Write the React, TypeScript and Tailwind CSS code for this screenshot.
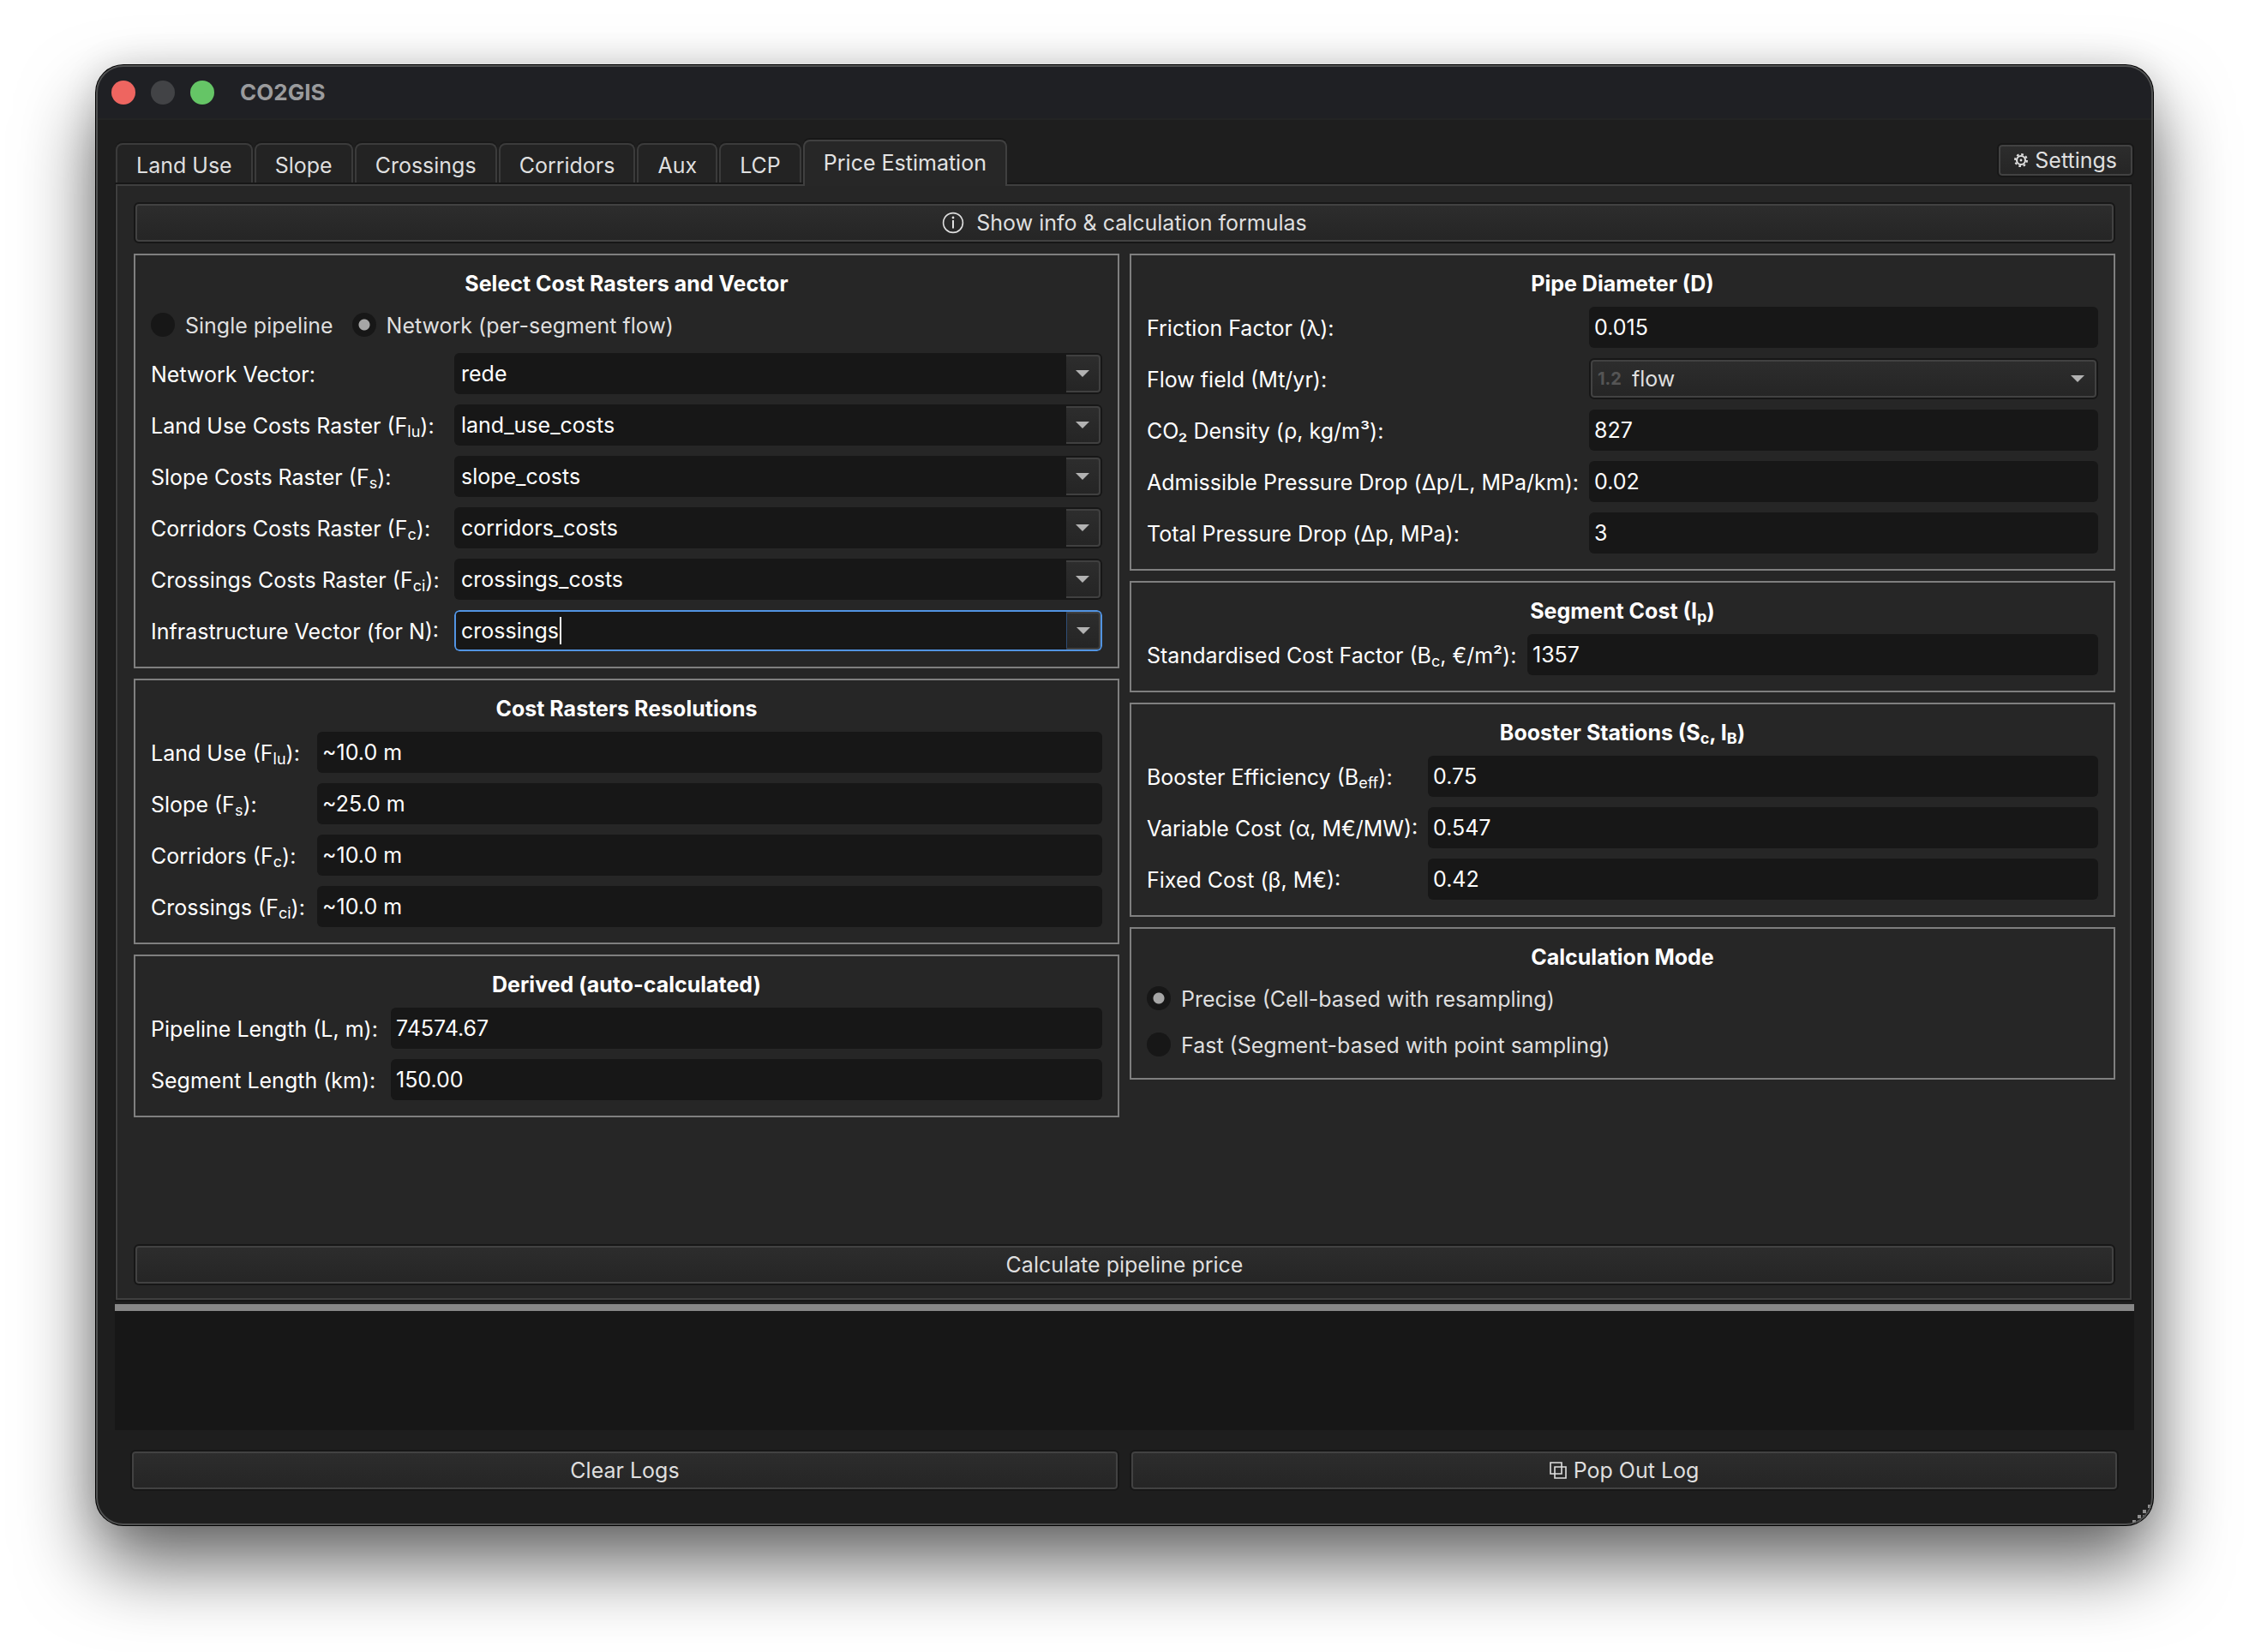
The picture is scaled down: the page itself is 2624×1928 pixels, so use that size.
import React, { useId } from "react";

const bevel =
  "rounded-md border-2 border-[#171717] bg-linear-to-b from-[#2d2d2d] to-[#252525] shadow-[inset_0_0_0_2px_#424242] text-[#dfdfdf]";

const fieldBox = "h-12 w-full min-w-0 rounded-md bg-[#171717] text-white outline-none";

function Arrow({ className = "" }: { className?: string }) {
  return (
    <svg className={className} width="16" height="8" viewBox="0 0 16 8" aria-hidden="true">
      <path d="M0 0h16L8 8z" fill="#b2b2b2" />
    </svg>
  );
}

function Sub({ children }: { children: React.ReactNode }) {
  return <span className="relative top-1 text-lg leading-none">{children}</span>;
}

function Group({ title, children }: { title: React.ReactNode; children: React.ReactNode }) {
  return (
    <section className="flex flex-col gap-3 border-2 border-[#7f7f7f] p-[18px]">
      <h2 className="h-[30px] text-center leading-[30px] font-bold text-white">{title}</h2>
      {children}
    </section>
  );
}

function Row({ label, cols, children }: { label: React.ReactNode; cols: string; children: (id: string) => React.ReactNode }) {
  const id = useId();
  return (
    <div className={`grid h-12 items-center gap-3 ${cols}`}>
      <label htmlFor={id} className="pt-0.5 whitespace-nowrap text-white">
        {label}
      </label>
      {children(id)}
    </div>
  );
}

function TextRow({ label, value, cols, readOnly }: { label: React.ReactNode; value: string; cols: string; readOnly?: boolean }) {
  return (
    <Row label={label} cols={cols}>
      {(id) => <input id={id} type="text" defaultValue={value} readOnly={readOnly} className={`${fieldBox} px-1.5`} />}
    </Row>
  );
}

function ComboRow({ label, value, active }: { label: React.ReactNode; value: string; active?: boolean }) {
  return (
    <Row label={label} cols="grid-cols-[342px_minmax(0,1fr)]">
      {(id) => (
        <div className="relative flex h-12 overflow-hidden rounded-md bg-[#171717]">
          <input id={id} type="text" defaultValue={value} className="h-12 min-w-0 flex-1 bg-transparent pl-2 text-white outline-none" />
          <button
            type="button"
            aria-label="Show options"
            className={`my-0.5 mr-0.5 flex w-10 items-center justify-center rounded-r border-y-2 border-r-2 border-[#404040] bg-linear-to-b from-[#2d2d2d] to-[#252525] ${active ? "border-l border-l-[#2f4d75]" : ""}`}
          >
            <Arrow />
          </button>
          {active && (
            <>
              <span className="pointer-events-none absolute inset-0 rounded-md border-2 border-[#5294e2]" />
              <span className="pointer-events-none absolute top-2 left-[123px] h-8 w-0.5 bg-white" />
            </>
          )}
        </div>
      )}
    </Row>
  );
}

function Radio({ label, name, checked }: { label: string; name: string; checked?: boolean }) {
  return (
    <label className="flex items-center gap-3 text-[#dfdfdf]">
      <input
        type="radio"
        name={name}
        defaultChecked={checked}
        className="size-7 shrink-0 appearance-none rounded-full bg-[#171717] checked:bg-[radial-gradient(circle,#a6a6a6_0,#a6a6a6_6px,#171717_7px)]"
      />
      <span className="pt-0.5">{label}</span>
    </label>
  );
}

const tabs = ["Land Use", "Slope", "Crossings", "Corridors", "Aux", "LCP", "Price Estimation"];

const res = "grid-cols-[182px_minmax(0,1fr)]";
const derived = "grid-cols-[268px_minmax(0,1fr)]";
const pipe = "grid-cols-[504px_minmax(0,1fr)]";
const segment = "grid-cols-[432px_minmax(0,1fr)]";
const booster = "grid-cols-[316px_minmax(0,1fr)]";

export default function App() {
  return (
    <div className="min-h-screen bg-white px-28 pt-[76px] pb-[148px] font-['Inter','Noto_Sans',sans-serif] text-[25px] leading-[30px]">
      <div className="relative flex min-h-[1704px] flex-col overflow-hidden rounded-[32px] bg-[#1e1e1e] shadow-[0_0_0_1px_#000,0_46px_88px_rgba(0,0,0,0.6),0_0_40px_rgba(0,0,0,0.12)]">
        <header className="flex h-16 items-center gap-[18px] border-b-2 border-[#232424] bg-[#1f2024] pt-0.5 pl-[18px]">
          <button type="button" aria-label="Close" className="size-7 rounded-full bg-[#ee6560]" />
          <button type="button" aria-label="Minimize" className="size-7 rounded-full bg-[#424346]" />
          <button type="button" aria-label="Zoom" className="size-7 rounded-full bg-[#65c566]" />
          <h1 className="ml-3 text-[26px] font-bold text-[#9a9b9d]">CO2GIS</h1>
        </header>

        <main className="flex flex-1 flex-col px-[22px] pt-[23px] pb-10">
          <div className="flex items-end justify-between">
            <div role="tablist" className="z-10 -mb-1 ml-px flex items-end">
              {tabs.map((t) =>
                t === "Price Estimation" ? (
                  <button
                    key={t}
                    type="button"
                    role="tab"
                    aria-selected="true"
                    className="h-[54px] rounded-t-lg border-2 border-b-0 border-[#404040] bg-[#272727] px-[22px] pb-0.5 text-[#e2e2e2] shadow-[0_-2px_0_#171717]"
                  >
                    {t}
                  </button>
                ) : (
                  <button
                    key={t}
                    type="button"
                    role="tab"
                    aria-selected="false"
                    className="mr-0.5 mb-1 h-[46px] rounded-t-lg border-2 border-b-0 border-[#3b3b3b] bg-[#232323] px-[22px] pt-1 text-[#dfdfdf] shadow-[0_-2px_0_#191919]"
                  >
                    {t}
                  </button>
                ),
              )}
            </div>
            <button type="button" className={`mb-1.5 flex h-10 items-center gap-2 px-[18px] ${bevel}`}>
              <svg width="16" height="16" viewBox="0 0 18 18" fill="none" stroke="currentColor" aria-hidden="true">
                <circle cx="9" cy="9" r="5.6" strokeWidth="2.4" />
                <circle cx="9" cy="9" r="1.6" fill="currentColor" stroke="none" />
                <circle cx="9" cy="9" r="7.8" strokeWidth="2.4" strokeDasharray="3 3.126" />
              </svg>
              Settings
            </button>
          </div>

          <div className="mr-0.5 flex flex-1 flex-col border-x border-y-2 border-[#171717]">
            <div className="flex flex-1 flex-col gap-3 border-2 border-[#3f3f3f] bg-[#262626] pt-[19px] pr-[17px] pb-[15px] pl-[19px]">
              <button type="button" className={`flex h-12 items-center justify-center gap-3.5 ${bevel}`}>
                <svg width="26" height="26" viewBox="0 0 26 26" fill="none" stroke="currentColor" aria-hidden="true">
                  <circle cx="13" cy="13" r="11.4" strokeWidth="1.6" />
                  <path d="M13 10v9.500" strokeWidth="2" />
                  <circle cx="13" cy="7" r="1.4" fill="currentColor" stroke="none" />
                </svg>
                Show info &amp; calculation formulas
              </button>

              <div className="grid flex-1 grid-cols-2 items-start gap-3">
                <div className="flex flex-col gap-3">
                  <Group title="Select Cost Rasters and Vector">
                    <div className="flex h-[42px] items-center gap-[22px]">
                      <Radio name="source" label="Single pipeline" />
                      <Radio name="source" label="Network (per-segment flow)" checked />
                    </div>
                    <ComboRow label="Network Vector:" value="rede" />
                    <ComboRow label={<>Land Use Costs Raster (F<Sub>lu</Sub>):</>} value="land_use_costs" />
                    <ComboRow label={<>Slope Costs Raster (F<Sub>s</Sub>):</>} value="slope_costs" />
                    <ComboRow label={<>Corridors Costs Raster (F<Sub>c</Sub>):</>} value="corridors_costs" />
                    <ComboRow label={<>Crossings Costs Raster (F<Sub>ci</Sub>):</>} value="crossings_costs" />
                    <ComboRow label="Infrastructure Vector (for N):" value="crossings" active />
                  </Group>
                  <Group title="Cost Rasters Resolutions">
                    <TextRow cols={res} label={<>Land Use (F<Sub>lu</Sub>):</>} value="~10.0 m" readOnly />
                    <TextRow cols={res} label={<>Slope (F<Sub>s</Sub>):</>} value="~25.0 m" readOnly />
                    <TextRow cols={res} label={<>Corridors (F<Sub>c</Sub>):</>} value="~10.0 m" readOnly />
                    <TextRow cols={res} label={<>Crossings (F<Sub>ci</Sub>):</>} value="~10.0 m" readOnly />
                  </Group>
                  <Group title="Derived (auto-calculated)">
                    <TextRow cols={derived} label="Pipeline Length (L, m):" value="74574.67" readOnly />
                    <TextRow cols={derived} label="Segment Length (km):" value="150.00" readOnly />
                  </Group>
                </div>

                <div className="flex flex-col gap-3">
                  <Group title="Pipe Diameter (D)">
                    <TextRow cols={pipe} label="Friction Factor (λ):" value="0.015" />
                    <Row cols={pipe} label="Flow field (Mt/yr):">
                      {(id) => (
                        <div className={`relative h-12 ${bevel}`}>
                          <span className="pointer-events-none absolute top-1.5 left-2 text-xl leading-8 font-bold text-[#555]">1.2</span>
                          <select id={id} className="size-full appearance-none bg-transparent pl-12 outline-none">
                            <option>flow</option>
                          </select>
                          <Arrow className="pointer-events-none absolute top-[18px] right-3.5" />
                        </div>
                      )}
                    </Row>
                    <TextRow cols={pipe} label="CO₂ Density (ρ, kg/m³):" value="827" />
                    <TextRow cols={pipe} label="Admissible Pressure Drop (Δp/L, MPa/km):" value="0.02" />
                    <TextRow cols={pipe} label="Total Pressure Drop (Δp, MPa):" value="3" />
                  </Group>
                  <Group title={<>Segment Cost (I<Sub>p</Sub>)</>}>
                    <TextRow cols={segment} label={<>Standardised Cost Factor (B<Sub>c</Sub>, €/m²):</>} value="1357" />
                  </Group>
                  <Group title={<>Booster Stations (S<Sub>c</Sub>, I<Sub>B</Sub>)</>}>
                    <TextRow cols={booster} label={<>Booster Efficiency (B<Sub>eff</Sub>):</>} value="0.75" />
                    <TextRow cols={booster} label="Variable Cost (α, M€/MW):" value="0.547" />
                    <TextRow cols={booster} label="Fixed Cost (β, M€):" value="0.42" />
                  </Group>
                  <Group title="Calculation Mode">
                    <div className="flex h-[42px] items-center">
                      <Radio name="mode" label="Precise (Cell-based with resampling)" checked />
                    </div>
                    <div className="flex h-[42px] items-center">
                      <Radio name="mode" label="Fast (Segment-based with point sampling)" />
                    </div>
                  </Group>
                </div>
              </div>

              <button type="button" className={`h-12 ${bevel}`}>
                Calculate pipeline price
              </button>
            </div>
          </div>

          <div role="separator" className="mt-[3px] h-2 bg-[#888888]" />
          <textarea readOnly aria-label="Log" className="block h-[139px] w-full resize-none bg-[#171717] text-white outline-none" />

          <div className="mt-[23px] grid grid-cols-2 gap-3 px-[18px]">
            <button type="button" className={`h-12 ${bevel}`}>
              Clear Logs
            </button>
            <button type="button" className={`flex h-12 items-center justify-center gap-2 ${bevel}`}>
              <svg width="20" height="20" viewBox="0 0 20 20" fill="none" stroke="currentColor" strokeWidth="1.6" aria-hidden="true">
                <path d="M1 1h13v13H1z" />
                <path d="M6 6h13v13H6z" />
              </svg>
              Pop Out Log
            </button>
          </div>
        </main>

        <svg className="absolute right-0 bottom-0" width="24" height="24" viewBox="0 0 24 24" fill="#8f8f8f" aria-hidden="true">
          <path d="M18 0h4v4h-4zM12 6h4v4h-4zM6 12h4v4H6zM0 18h4v4H0z" />
          <path d="M18 6h4v4h-4zM12 12h4v4h-4zM6 18h4v4H6z" fill="#6a6a6a" />
        </svg>
        <span className="pointer-events-none absolute inset-0 rounded-[32px] border-2 border-[#505151]" />
      </div>
    </div>
  );
}
